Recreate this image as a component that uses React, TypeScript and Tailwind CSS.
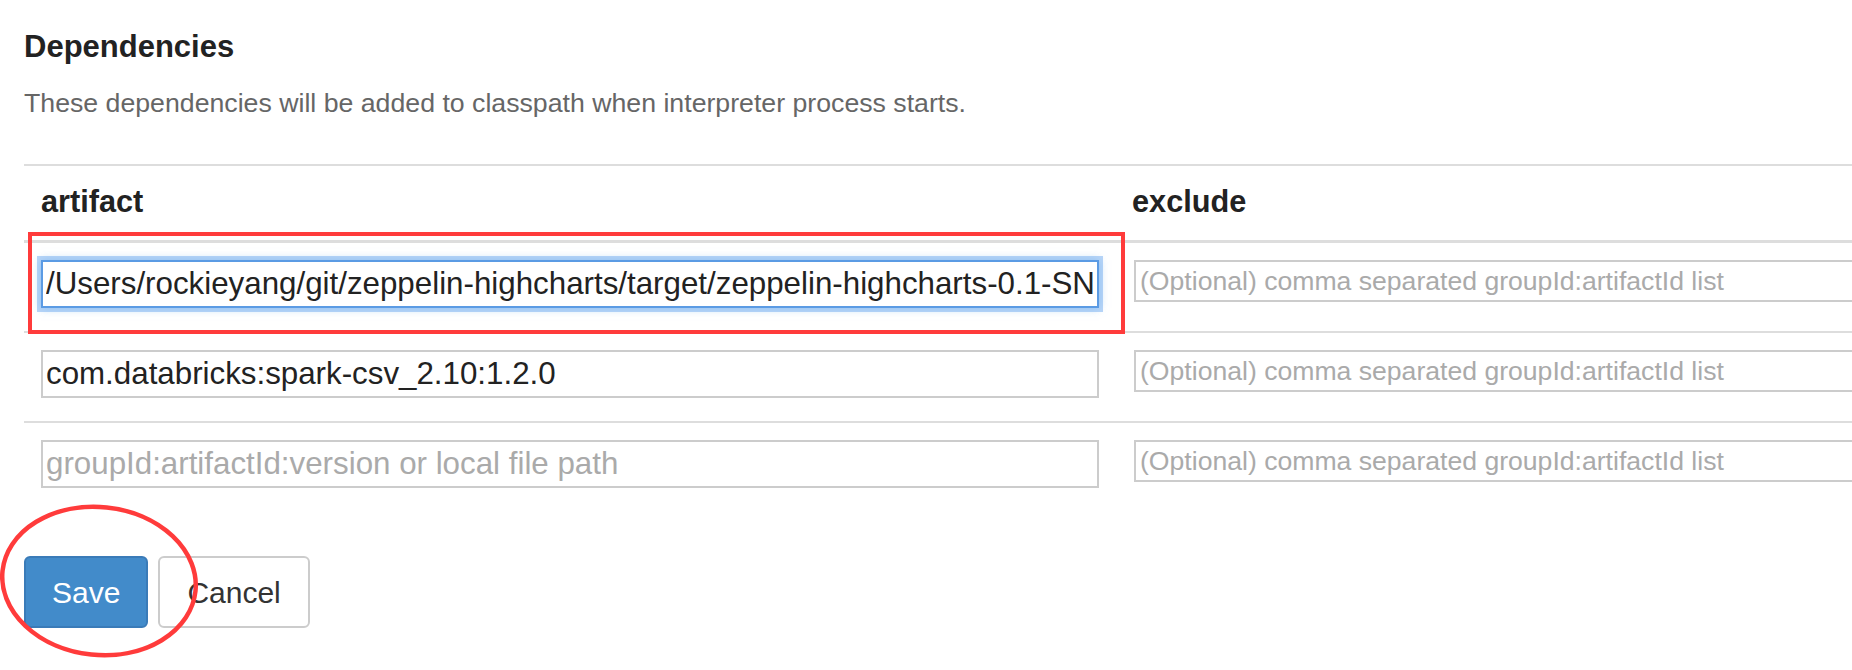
import React from 'react';

const rows = [
  {
    artifact: '/Users/rockieyang/git/zeppelin-highcharts/target/zeppelin-highcharts-0.1-SNAPSHOT.jar',
    focused: true,
  },
  { artifact: 'com.databricks:spark-csv_2.10:1.2.0', focused: false },
  { artifact: '', focused: false },
];

function DependencyRow({ artifact, focused, last }: { artifact: string; focused: boolean; last: boolean }) {
  return (
    <div className={`flex ${last ? '' : 'border-b-2 border-[#ddd]'}`}>
      <div className="w-[1092px] shrink-0 px-[17px] pt-[17px] pb-[23px]">
        <input
          readOnly
          value={artifact}
          placeholder="groupId:artifactId:version or local file path"
          className={`block h-[48px] w-full bg-white px-[3px] text-[31.3px] text-[#222] outline-none placeholder:text-[#aaa] ${
            focused
              ? 'border-2 border-[#5b9be4] shadow-[0_0_0_4px_rgba(125,178,240,0.55),0_0_9px_rgba(102,175,233,0.6)]'
              : 'border-2 border-[#ccc]'
          }`}
        />
      </div>
      <div className="flex-1 pl-[18px] pt-[17px]">
        <input
          readOnly
          value=""
          placeholder="(Optional) comma separated groupId:artifactId list"
          className="block h-[42px] w-[900px] border-2 border-[#ccc] bg-white px-[4px] text-[26.6px] text-[#222] outline-none placeholder:text-[#aaa]"
        />
      </div>
    </div>
  );
}

export default function App() {
  return (
    <div className="relative h-[670px] w-[1852px] overflow-hidden bg-white font-['Liberation_Sans',Arial,sans-serif]">
      <div className="pl-[24px] pt-[29px]">
        <h3 className="text-[31px] leading-[36px] font-bold text-[#222]">Dependencies</h3>
        <p className="mt-[23px] text-[26.7px] leading-[30px] text-[#666]">
          These dependencies will be added to classpath when interpreter process starts.
        </p>
        <div className="mt-[46px] h-[2px] bg-[#ddd]" />

        {/* table */}
        <div className="w-[2100px]">
          <div className="flex border-b-[3px] border-[#ddd]">
            <div className="w-[1092px] shrink-0 pl-[17px] pt-[18px] pb-[20px] text-[30.7px] leading-[36px] font-bold text-[#222]">
              artifact
            </div>
            <div className="flex-1 pl-[16px] pt-[18px] pb-[20px] text-[30.7px] leading-[36px] font-bold text-[#222]">
              exclude
            </div>
          </div>
          {rows.map((r, i) => (
            <DependencyRow key={i} artifact={r.artifact} focused={r.focused} last={i === rows.length - 1} />
          ))}
        </div>

        <div className="mt-[45px] flex gap-[10px]">
          <button className="h-[72px] rounded-[6px] border-2 border-[#3a7bb8] bg-[#428bca] px-[26px] text-[30px] text-white">
            Save
          </button>
          <button className="h-[72px] rounded-[6px] border-2 border-[#ccc] bg-white px-[27px] text-[30px] text-[#333]">
            Cancel
          </button>
        </div>
      </div>

      {/* annotations */}
      <div className="pointer-events-none absolute left-[28px] top-[232px] h-[102px] w-[1097px] border-4 border-[#ff3b3b]" />
      <svg className="pointer-events-none absolute left-0 top-[500px]" width="210" height="165" viewBox="0 0 210 165">
        <ellipse
          cx="99"
          cy="81"
          rx="97"
          ry="74"
          fill="none"
          stroke="#ff3b3b"
          strokeWidth="4.5"
          transform="rotate(6 99 81)"
        />
      </svg>
    </div>
  );
}
